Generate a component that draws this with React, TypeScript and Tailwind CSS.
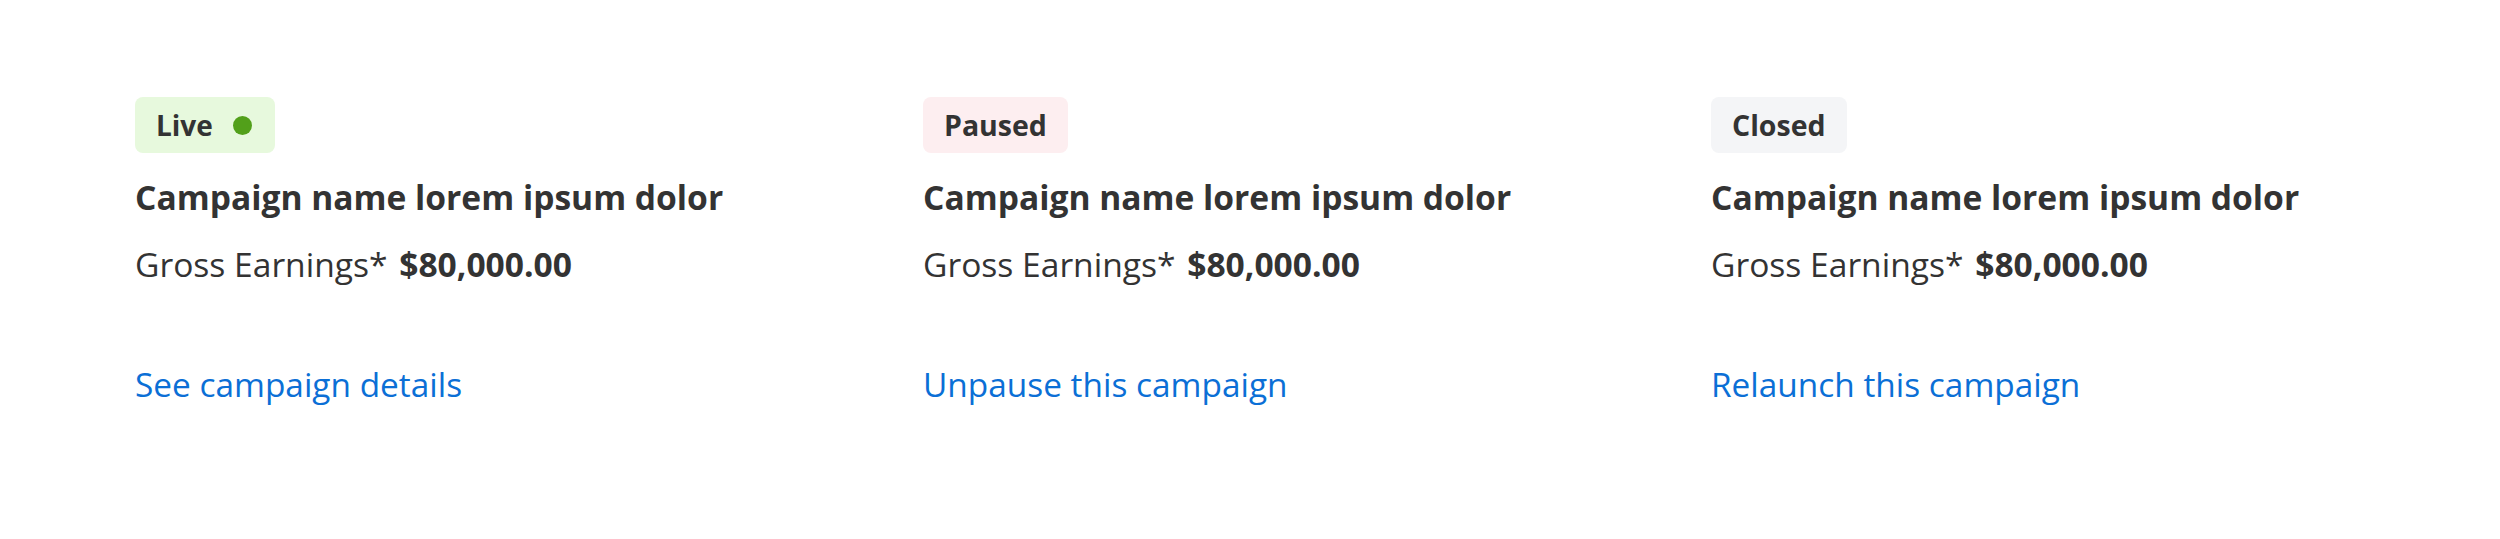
import type { ReactNode } from "react";

type Status = "live" | "paused" | "closed";

const campaigns: { status: Status; action: string }[] = [
  { status: "live", action: "See campaign details" },
  { status: "paused", action: "Unpause this campaign" },
  { status: "closed", action: "Relaunch this campaign" },
];

function StatusBadge({ status }: { status: Status }) {
  let label: ReactNode = null;
  if (status === "live") {
    return (
      <span className="inline-flex h-[56px] items-center gap-[20px] rounded-lg bg-[#e7f9dd] pl-[21px] pr-[23px] text-[28px] font-bold text-[#333333]">
        Live
        <span className="h-[19px] w-[19px] rounded-full bg-[#52a01a]" />
      </span>
    );
  }
  if (status === "paused") label = "Paused";
  if (status === "closed") label = "Closed";
  return (
    <span
      className={`inline-flex h-[56px] items-center rounded-lg px-[21px] text-[28.5px] font-bold text-[#333333] ${
        status === "paused" ? "bg-[#fdeef0]" : "bg-[#f4f5f7]"
      }`}
    >
      {label}
    </span>
  );
}

export default function App() {
  return (
    <div
      className="h-[539px] w-full bg-white pl-[135px] pt-[97px]"
      style={{ fontFamily: '"Open Sans", "Noto Sans", sans-serif' }}
    >
      <div className="grid grid-cols-[788px_788px_1fr]">
        {campaigns.map((c) => (
          <div key={c.status} className="flex flex-col items-start">
            <StatusBadge status={c.status} />
            <h2 className="mt-[21px] text-[33.6px] leading-[46px] font-bold text-[#333333]">
              Campaign name lorem ipsum dolor
            </h2>
            <p className="mt-[21px] text-[33.6px] leading-[46px] text-[#333333]">
              Gross Earnings* <span className="ml-[3px] font-bold">$80,000.00</span>
            </p>
            <a
              href="#"
              className="mt-[74px] text-[33.4px] leading-[46px] text-[#0b6fd6]"
            >
              {c.action}
            </a>
          </div>
        ))}
      </div>
    </div>
  );
}
